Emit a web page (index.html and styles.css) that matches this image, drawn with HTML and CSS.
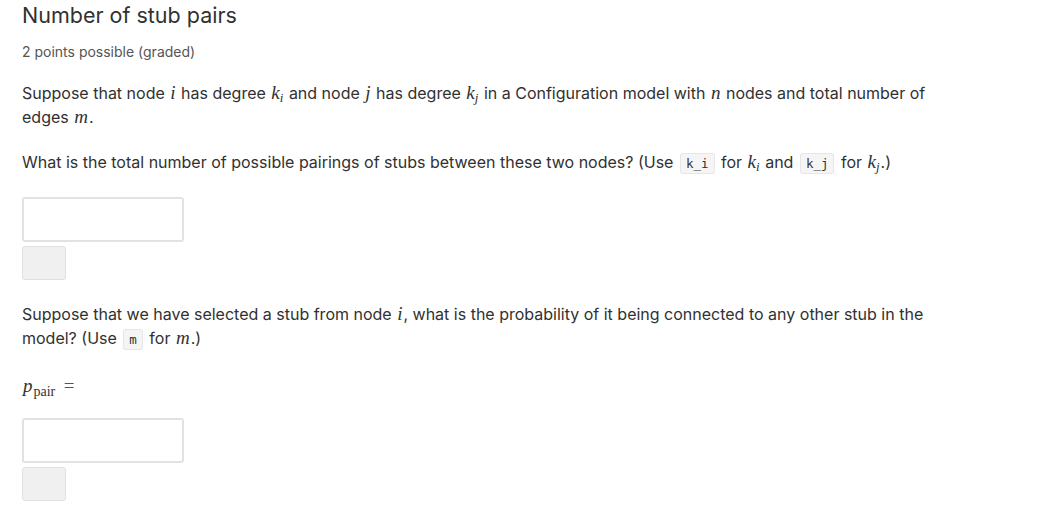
FILE: index.html
```html
<!DOCTYPE html>
<html>
<head>
<meta charset="utf-8">
<link rel="stylesheet" href="styles.css">
</head>
<body>
<div class="problem">
  <h3 class="title">Number of stub pairs</h3>
  <div class="meta">2 points possible (graded)</div>
  <p class="text first">Suppose that node <span class="m">i</span> has degree <span class="m">k<sub>i</sub></span> and node <span class="m">j</span> has degree <span class="m">k<sub>j</sub></span> in a Configuration model with <span class="m">n</span> nodes and total number of edges <span class="m">m</span>.</p>
  <p class="text">What is the total number of possible pairings of stubs between these two nodes? (Use <code>k_i</code> for <span class="m">k<sub>i</sub></span> and <code>k_j</code> for <span class="m">k<sub>j</sub></span>.)</p>
  <div class="answer">
    <div class="input"></div>
    <div class="btn"></div>
  </div>
  <p class="text q2">Suppose that we have selected a stub from node <span class="m">i</span>, what is the probability of it being connected to any other stub in the model? (Use <code>m</code> for <span class="m">m</span>.)</p>
  <p class="formula"><span class="m">p</span><span class="rm">pair</span> <span class="eq">=</span></p>
  <div class="answer a2">
    <div class="input"></div>
    <div class="btn"></div>
  </div>
</div>
</body>
</html>
```
FILE: styles.css
```css
body {
  margin: 0;
  background: #fff;
  font-family: Inter, "Noto Sans", sans-serif;
  color: #313131;
}
.problem {
  padding: 2px 22px 0 22px;
  width: 930px;
}
.title {
  margin: 0;
  font-size: 21.5px;
  font-weight: 400;
  line-height: 26px;
  color: #313131;
}
.meta {
  margin-top: 16px;
  font-size: 14px;
  line-height: 16px;
  color: #555;
}
.text {
  margin: 21px 0 0 0;
  font-size: 16px;
  line-height: 24px;
  color: #313131;
}
.text.first { margin-top: 21px; }
.m {
  display: inline-block;
  font-family: "Liberation Serif", "DejaVu Serif", serif;
  font-style: italic;
  font-size: 19px;
  line-height: 18px;
  padding: 0 1px;
}
.m sub {
  font-size: 13px;
  line-height: 0;
  vertical-align: -3px;
}
.rm {
  font-family: "Liberation Serif", serif;
  font-size: 14px;
  line-height: 1;
  vertical-align: -4px;
}
.eq {
  font-family: "Liberation Serif", serif;
  font-size: 19px;
  line-height: 1;
  margin-left: 4px;
  color: #555;
}
code {
  font-family: "DejaVu Sans Mono", monospace;
  font-size: 12.5px;
  line-height: 1;
  background: #f5f5f5;
  border: 1px solid #e6e6e6;
  border-radius: 3px;
  padding: 2px 5px;
  margin: 0 2px;
}
.answer {
  margin-top: 23px;
  display: flex;
  flex-direction: column;
  gap: 4px;
}
.input {
  width: 158px;
  height: 41px;
  border: 2px solid #e2e2e2;
  border-radius: 3px;
  background: #fff;
}
.btn {
  width: 42px;
  height: 32px;
  border: 1px solid #e0e0e0;
  border-radius: 3px;
  background: #f0f0f0;
}
.q2 { margin-top: 22px; }
.formula {
  margin: 24px 0 0 0;
  font-size: 16px;
  line-height: 24px;
}
.a2 { margin-top: 19px; }
```
